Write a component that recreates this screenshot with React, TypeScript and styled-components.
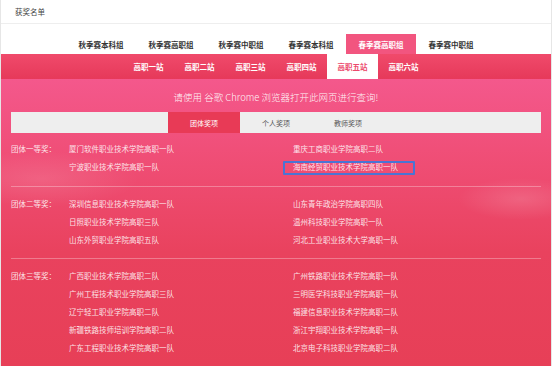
import React from "react";
import styled, { createGlobalStyle } from "styled-components";

const Global = createGlobalStyle`
  html, body { margin: 0; padding: 0; overflow: hidden; background: #fff; }
  body { font-family: "Noto Sans CJK SC", "Noto Sans", sans-serif; }
`;

const Page = styled.div`
  width: 552px;
  height: 366px;
  box-sizing: border-box;
  border-left: 1px solid #e6e6e6;
  border-right: 1px solid #e6e6e6;
  overflow: hidden;
  display: flex;
  flex-direction: column;
`;

const Header = styled.div`
  height: 23px;
  border-bottom: 1px solid #eeeeee;
  padding-left: 14px;
  display: flex;
  align-items: center;
  font-size: 7.5px;
  color: #444;
  flex-shrink: 0;
`;

const SeasonNav = styled.nav`
  height: 30px;
  display: flex;
  justify-content: center;
  align-items: flex-end;
  flex-shrink: 0;
`;

const SeasonTab = styled.div<{ $active?: boolean }>`
  width: 70px;
  height: 20px;
  display: flex;
  align-items: center;
  justify-content: center;
  font-size: 7.5px;
  font-weight: bold;
  color: ${(p) => (p.$active ? "#fff" : "#333")};
  background: ${(p) => (p.$active ? "#f2557f" : "transparent")};
`;

const StationBar = styled.nav`
  height: 25px;
  display: flex;
  justify-content: center;
  background: linear-gradient(#f04a6b, #e6395a);
  flex-shrink: 0;
`;

const StationTab = styled.div<{ $active?: boolean }>`
  width: 51px;
  height: 25px;
  display: flex;
  align-items: center;
  justify-content: center;
  font-size: 7.5px;
  font-weight: bold;
  color: ${(p) => (p.$active ? "#ec4a6c" : "#fff")};
  background: ${(p) => (p.$active ? "#fff" : "transparent")};
`;

const Panel = styled.main`
  flex: 1;
  padding: 0 10px;
  background:
    radial-gradient(ellipse 140px 40px at 40px 100px, rgba(255, 255, 255, 0.12), transparent 70%),
    radial-gradient(ellipse 90px 30px at 520px 120px, rgba(255, 255, 255, 0.14), transparent 70%),
    linear-gradient(180deg, #f4588c 0%, #ef4d74 30%, #e9425e 60%, #e73f57 100%);
`;

const Notice = styled.div`
  padding-top: 11px;
  height: 14px;
  line-height: 14px;
  margin-bottom: 8px;
  text-align: center;
  font-size: 9.5px;
  font-weight: 300;
  color: rgba(255, 255, 255, 0.95);
`;

const AwardTabs = styled.div`
  height: 21px;
  background: #eeeeee;
  display: flex;
  justify-content: center;
`;

const AwardTab = styled.div<{ $active?: boolean }>`
  width: 72px;
  display: flex;
  align-items: center;
  justify-content: center;
  font-size: 7px;
  color: ${(p) => (p.$active ? "#fff" : "#555")};
  background: ${(p) => (p.$active ? "#e83a56" : "transparent")};
`;

const Section = styled.section`
  display: grid;
  grid-template-columns: 58px 224px 224px;
  grid-auto-rows: 18px;
  padding: 8px 0 9px;
  border-bottom: 1px solid rgba(255, 255, 255, 0.3);
  &:first-of-type {
    padding-top: 7px;
    padding-bottom: 10px;
  }
`;

const Label = styled.div`
  grid-column: 1;
  grid-row: 1;
  line-height: 18px;
  font-size: 7.5px;
  color: rgba(255, 255, 255, 0.85);
`;

const Item = styled.div<{ $highlight?: boolean }>`
  justify-self: start;
  position: relative;
  line-height: 18px;
  font-size: 7.5px;
  color: rgba(255, 255, 255, 0.86);
  ${(p) =>
    p.$highlight
      ? `&::after {
          content: "";
          position: absolute;
          left: -10px;
          right: -17px;
          top: 3px;
          bottom: 1px;
          border: 2px solid #4a74d4;
          border-radius: 1px;
        }`
      : ""}
`;

const seasons = ["秋季赛本科组", "秋季赛高职组", "秋季赛中职组", "春季赛本科组", "春季赛高职组", "春季赛中职组"];
const stations = ["高职一站", "高职二站", "高职三站", "高职四站", "高职五站", "高职六站"];
const awardTabs = ["团体奖项", "个人奖项", "教师奖项"];

type Award = { label: string; rows: [string, string][] };

const awards: Award[] = [
  {
    label: "团体一等奖：",
    rows: [
      ["厦门软件职业技术学院高职一队", "重庆工商职业学院高职二队"],
      ["宁波职业技术学院高职一队", "海南经贸职业技术学院高职一队"],
    ],
  },
  {
    label: "团体二等奖：",
    rows: [
      ["深圳信息职业技术学院高职一队", "山东青年政治学院高职四队"],
      ["日照职业技术学院高职三队", "温州科技职业学院高职一队"],
      ["山东外贸职业学院高职五队", "河北工业职业技术大学高职一队"],
    ],
  },
  {
    label: "团体三等奖：",
    rows: [
      ["广西职业技术学院高职二队", "广州铁路职业技术学院高职一队"],
      ["广州工程技术职业学院高职三队", "三明医学科技职业学院高职一队"],
      ["辽宁轻工职业学院高职二队", "福建信息职业技术学院高职二队"],
      ["新疆铁路技师培训学院高职二队", "浙江宇翔职业技术学院高职一队"],
      ["广东工程职业技术学院高职一队", "北京电子科技职业学院高职二队"],
    ],
  },
];

const HIGHLIGHT = "海南经贸职业技术学院高职一队";

export default function App() {
  return (
    <>
      <Global />
      <Page>
        <Header>获奖名单</Header>
        <SeasonNav>
          {seasons.map((s) => (
            <SeasonTab key={s} $active={s === "春季赛高职组"}>
              {s}
            </SeasonTab>
          ))}
        </SeasonNav>
        <StationBar>
          {stations.map((s) => (
            <StationTab key={s} $active={s === "高职五站"}>
              {s}
            </StationTab>
          ))}
        </StationBar>
        <Panel>
          <Notice>请使用 谷歌 Chrome 浏览器打开此网页进行查询!</Notice>
          <AwardTabs>
            {awardTabs.map((t, i) => (
              <AwardTab key={t} $active={i === 0}>
                {t}
              </AwardTab>
            ))}
          </AwardTabs>
          {awards.map((a) => (
            <Section key={a.label}>
              <Label>{a.label}</Label>
              {a.rows.map(([l, r]) => (
                <React.Fragment key={l}>
                  <Item style={{ gridColumn: 2 }} $highlight={l === HIGHLIGHT}>
                    {l}
                  </Item>
                  <Item style={{ gridColumn: 3 }} $highlight={r === HIGHLIGHT}>
                    {r}
                  </Item>
                </React.Fragment>
              ))}
            </Section>
          ))}
        </Panel>
      </Page>
    </>
  );
}
